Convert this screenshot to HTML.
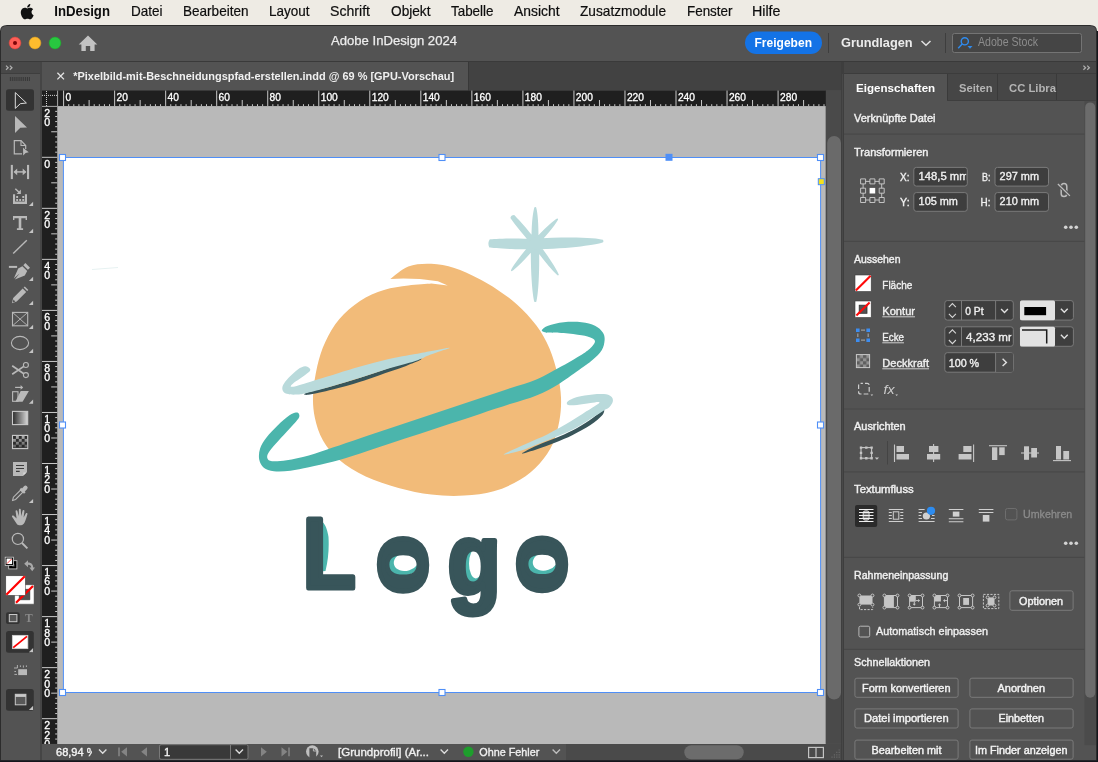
<!DOCTYPE html>
<html lang="de">
<head>
<meta charset="utf-8">
<title>Adobe InDesign 2024 – Pixelbild-mit-Beschneidungspfad-erstellen.indd</title>
<style>
*{box-sizing:border-box;margin:0;padding:0}
html,body{width:1098px;height:762px;overflow:hidden;background:#111111}
body{position:relative;font-family:"Liberation Sans",sans-serif}
#menubar-bg{position:absolute;left:0;top:0;width:1098px;height:31px;background:#eeebe4}
#desk{position:absolute;left:0;top:31px;width:1098px;height:731px;background:#15161c}
text{white-space:pre}
body>svg{will-change:transform;-webkit-font-smoothing:antialiased}
</style>
</head>
<body>
<div id="menubar-bg"></div>
<div id="desk"></div>
<svg width="1098" height="762" viewBox="0 0 1098 762" font-family="'Liberation Sans',sans-serif" style="position:absolute;left:0;top:0">
<defs>
<clipPath id="cv"><rect x="57.3" y="106.1" width="768.5" height="637.9"/></clipPath>
<clipPath id="win"><path d="M0 31 Q0 25 7 25 H1090 Q1097 25 1097 31 V760.2 H0Z"/></clipPath>
<linearGradient id="gsw" x1="0" x2="1" y1="0" y2="0"><stop offset="0" stop-color="#2a2a2a"/><stop offset="1" stop-color="#d8d8d8"/></linearGradient>
<linearGradient id="gfe" x1="0" x2="0" y1="0" y2="1"><stop offset="0" stop-color="#555" stop-opacity="0.1"/><stop offset="1" stop-color="#222" stop-opacity="0.65"/></linearGradient>
<pattern id="chk" width="5.8" height="5.8" patternUnits="userSpaceOnUse" x="13" y="436"><rect width="5.8" height="5.8" fill="#b4b4b4"/><rect width="2.9" height="2.9" fill="#262626"/><rect x="2.9" y="2.9" width="2.9" height="2.9" fill="#262626"/></pattern>
<pattern id="chk2" width="6.4" height="6.4" patternUnits="userSpaceOnUse" x="856.7" y="354.9"><rect width="6.4" height="6.4" fill="#929292"/><rect width="3.2" height="3.2" fill="#5e5e5e"/><rect x="3.2" y="3.2" width="3.2" height="3.2" fill="#5e5e5e"/></pattern>
</defs>
<g id="menubar">
<g transform="translate(14.0,0.3) scale(0.0222,0.0216)" fill="#111"><path d="M788 546c-1-89 73-132 76-134-42-61-106-69-129-70-55-6-107 32-135 32-28 0-71-31-117-30-60 1-116 35-147 89-63 109-16 270 45 358 30 43 65 92 112 90 45-2 62-29 116-29 54 0 70 29 117 28 48-1 79-44 108-87 34-50 48-98 49-101-1 0-94-36-95-146zM699 283c25-30 41-71 37-113-36 1-79 24-104 54-23 26-43 69-38 109 40 3 81-20 105-50z"/></g>
<text x="54.3" y="16.0" font-size="14.2" fill="#0e0e0e" textLength="55.7" lengthAdjust="spacingAndGlyphs" font-weight="bold" >InDesign</text>
<text x="131.0" y="16.0" font-size="14.2" fill="#0e0e0e" textLength="31.5" lengthAdjust="spacingAndGlyphs" stroke="#0e0e0e" stroke-width="0.2" >Datei</text>
<text x="183.0" y="16.0" font-size="14.2" fill="#0e0e0e" textLength="65.5" lengthAdjust="spacingAndGlyphs" stroke="#0e0e0e" stroke-width="0.2" >Bearbeiten</text>
<text x="269.0" y="16.0" font-size="14.2" fill="#0e0e0e" textLength="40.5" lengthAdjust="spacingAndGlyphs" stroke="#0e0e0e" stroke-width="0.2" >Layout</text>
<text x="330.0" y="16.0" font-size="14.2" fill="#0e0e0e" textLength="40.0" lengthAdjust="spacingAndGlyphs" stroke="#0e0e0e" stroke-width="0.2" >Schrift</text>
<text x="391.0" y="16.0" font-size="14.2" fill="#0e0e0e" textLength="39.5" lengthAdjust="spacingAndGlyphs" stroke="#0e0e0e" stroke-width="0.2" >Objekt</text>
<text x="451.0" y="16.0" font-size="14.2" fill="#0e0e0e" textLength="42.5" lengthAdjust="spacingAndGlyphs" stroke="#0e0e0e" stroke-width="0.2" >Tabelle</text>
<text x="514.0" y="16.0" font-size="14.2" fill="#0e0e0e" textLength="45.5" lengthAdjust="spacingAndGlyphs" stroke="#0e0e0e" stroke-width="0.2" >Ansicht</text>
<text x="580.0" y="16.0" font-size="14.2" fill="#0e0e0e" textLength="86.0" lengthAdjust="spacingAndGlyphs" stroke="#0e0e0e" stroke-width="0.2" >Zusatzmodule</text>
<text x="687.0" y="16.0" font-size="14.2" fill="#0e0e0e" textLength="45.5" lengthAdjust="spacingAndGlyphs" stroke="#0e0e0e" stroke-width="0.2" >Fenster</text>
<text x="752.0" y="16.0" font-size="14.2" fill="#0e0e0e" textLength="28.5" lengthAdjust="spacingAndGlyphs" stroke="#0e0e0e" stroke-width="0.2" >Hilfe</text>
</g>
<g id="window" clip-path="url(#win)">
<rect x="0.00" y="25.00" width="1098.00" height="736.00" fill="#535353" />
<g id="titlebar">
<circle cx="15" cy="43" r="5.9" fill="#fe5f57" stroke="#e0443e" stroke-width="0.6"/>
<circle cx="35" cy="43" r="5.9" fill="#febc2e" stroke="#dea123" stroke-width="0.6"/>
<circle cx="55" cy="43" r="5.9" fill="#28c840" stroke="#1dad2b" stroke-width="0.6"/>
<circle cx="15" cy="43" r="2" fill="#7e0508"/>
<path d="M88 35.6 L97.3 44.6 L94.6 44.6 L94.6 51 L90.2 51 L90.2 46 L85.8 46 L85.8 51 L81.4 51 L81.4 44.6 L78.7 44.6 Z" fill="#c2c2c2" />
<text x="331.0" y="45.0" font-size="12.6" fill="#ececec" textLength="126.0" lengthAdjust="spacingAndGlyphs" stroke="#ececec" stroke-width="0.25" >Adobe InDesign 2024</text>
<rect x="745.00" y="31.50" width="77.00" height="22.60" fill="#1473e6" rx="11.3" />
<text x="754.5" y="47.0" font-size="12.5" fill="#ffffff" textLength="57.5" lengthAdjust="spacingAndGlyphs" font-weight="bold" >Freigeben</text>
<line x1="828.50" y1="33.00" x2="828.50" y2="53.00" stroke="#3e3e3e" stroke-width="1" />
<text x="841.0" y="46.8" font-size="13" fill="#ececec" textLength="71.6" lengthAdjust="spacingAndGlyphs" font-weight="bold" >Grundlagen</text>
<path d="M921.5 41 L926 45.3 L930.5 41" fill="none" stroke="#e0e0e0" stroke-width="1.5" />
<line x1="945.50" y1="33.00" x2="945.50" y2="53.00" stroke="#3e3e3e" stroke-width="1" />
<rect x="952.50" y="33.50" width="129.00" height="19.00" fill="#454545" rx="2" stroke="#747474" stroke-width="1" />
<circle cx="964.8" cy="41.3" r="3.6" fill="none" stroke="#2f8cf0" stroke-width="1.4"/>
<line x1="962.20" y1="44.00" x2="958.20" y2="48.20" stroke="#2f8cf0" stroke-width="1.5" />
<path d="M967.5 46 L972.5 46 L970 48.8Z" fill="#2f8cf0" />
<text x="978.0" y="46.3" font-size="12" fill="#8c8c8c" textLength="60.0" lengthAdjust="spacingAndGlyphs" >Adobe Stock</text>
</g>
<g id="doc-tabs">
<rect x="42.00" y="62.00" width="800.00" height="28.50" fill="#424242" />
<rect x="42.00" y="62.00" width="426.00" height="28.50" fill="#535353" />
<line x1="468.50" y1="62.00" x2="468.50" y2="90.50" stroke="#383838" stroke-width="1" />
<line x1="0.00" y1="61.50" x2="1098.00" y2="61.50" stroke="#3a3a3a" stroke-width="1" />
<path d="M57.4 72.8 L64 79.4 M64 72.8 L57.4 79.4" fill="none" stroke="#e4e4e4" stroke-width="1.3" />
<text x="73.2" y="79.7" font-size="11" fill="#f0f0f0" textLength="381.0" lengthAdjust="spacingAndGlyphs" font-weight="bold" >*Pixelbild-mit-Beschneidungspfad-erstellen.indd @ 69 % [GPU-Vorschau]</text>
</g>
<g id="rulers">
<rect x="42.00" y="90.60" width="784.00" height="15.50" fill="#1f1f1f" />
<rect x="42.00" y="106.00" width="15.30" height="637.90" fill="#1f1f1f" />
<line x1="57.60" y1="90.60" x2="57.60" y2="106.10" stroke="#a8a8a8" stroke-width="1" />
<line x1="42.00" y1="106.40" x2="57.30" y2="106.40" stroke="#a8a8a8" stroke-width="1" />
<line x1="46.50" y1="91.00" x2="46.50" y2="106.00" stroke="#d0d0d0" stroke-width="1" stroke-dasharray="1 1"/>
<line x1="42.00" y1="95.40" x2="57.00" y2="95.40" stroke="#d0d0d0" stroke-width="1" stroke-dasharray="1 1"/>
<path d="M68.70 104.2V106.1M73.81 104.2V106.1M78.91 104.2V106.1M84.01 104.2V106.1M94.22 104.2V106.1M99.32 104.2V106.1M104.43 104.2V106.1M109.53 104.2V106.1M119.74 104.2V106.1M124.84 104.2V106.1M129.94 104.2V106.1M135.05 104.2V106.1M145.25 104.2V106.1M150.36 104.2V106.1M155.46 104.2V106.1M160.56 104.2V106.1M170.77 104.2V106.1M175.87 104.2V106.1M180.98 104.2V106.1M186.08 104.2V106.1M196.29 104.2V106.1M201.39 104.2V106.1M206.50 104.2V106.1M211.60 104.2V106.1M221.81 104.2V106.1M226.91 104.2V106.1M232.01 104.2V106.1M237.12 104.2V106.1M247.32 104.2V106.1M252.43 104.2V106.1M257.53 104.2V106.1M262.63 104.2V106.1M272.84 104.2V106.1M277.94 104.2V106.1M283.05 104.2V106.1M288.15 104.2V106.1M298.36 104.2V106.1M303.46 104.2V106.1M308.56 104.2V106.1M313.67 104.2V106.1M323.87 104.2V106.1M328.98 104.2V106.1M334.08 104.2V106.1M339.18 104.2V106.1M349.39 104.2V106.1M354.49 104.2V106.1M359.60 104.2V106.1M364.70 104.2V106.1M374.91 104.2V106.1M380.01 104.2V106.1M385.11 104.2V106.1M390.22 104.2V106.1M400.42 104.2V106.1M405.53 104.2V106.1M410.63 104.2V106.1M415.73 104.2V106.1M425.94 104.2V106.1M431.04 104.2V106.1M436.15 104.2V106.1M441.25 104.2V106.1M451.46 104.2V106.1M456.56 104.2V106.1M461.67 104.2V106.1M466.77 104.2V106.1M476.98 104.2V106.1M482.08 104.2V106.1M487.18 104.2V106.1M492.29 104.2V106.1M502.49 104.2V106.1M507.60 104.2V106.1M512.70 104.2V106.1M517.80 104.2V106.1M528.01 104.2V106.1M533.11 104.2V106.1M538.22 104.2V106.1M543.32 104.2V106.1M553.53 104.2V106.1M558.63 104.2V106.1M563.73 104.2V106.1M568.84 104.2V106.1M579.04 104.2V106.1M584.15 104.2V106.1M589.25 104.2V106.1M594.35 104.2V106.1M604.56 104.2V106.1M609.66 104.2V106.1M614.77 104.2V106.1M619.87 104.2V106.1M630.08 104.2V106.1M635.18 104.2V106.1M640.28 104.2V106.1M645.39 104.2V106.1M655.59 104.2V106.1M660.70 104.2V106.1M665.80 104.2V106.1M670.90 104.2V106.1M681.11 104.2V106.1M686.21 104.2V106.1M691.32 104.2V106.1M696.42 104.2V106.1M706.63 104.2V106.1M711.73 104.2V106.1M716.84 104.2V106.1M721.94 104.2V106.1M732.15 104.2V106.1M737.25 104.2V106.1M742.35 104.2V106.1M747.46 104.2V106.1M757.66 104.2V106.1M762.77 104.2V106.1M767.87 104.2V106.1M772.97 104.2V106.1M783.18 104.2V106.1M788.28 104.2V106.1M793.39 104.2V106.1M798.49 104.2V106.1M808.70 104.2V106.1M813.80 104.2V106.1M818.90 104.2V106.1M824.01 104.2V106.1M89.12 100V106.1M140.15 100V106.1M191.19 100V106.1M242.22 100V106.1M293.25 100V106.1M344.29 100V106.1M395.32 100V106.1M446.36 100V106.1M497.39 100V106.1M548.42 100V106.1M599.46 100V106.1M650.49 100V106.1M701.52 100V106.1M752.56 100V106.1M803.59 100V106.1M63.60 90.6V106.1M114.63 90.6V106.1M165.67 90.6V106.1M216.70 90.6V106.1M267.74 90.6V106.1M318.77 90.6V106.1M369.80 90.6V106.1M420.84 90.6V106.1M471.87 90.6V106.1M522.91 90.6V106.1M573.94 90.6V106.1M624.97 90.6V106.1M676.01 90.6V106.1M727.04 90.6V106.1M778.08 90.6V106.1" fill="none" stroke="#c9c9c9" stroke-width="1" />
<text x="65.5" y="100.8" font-size="10.6" fill="#ffffff" textLength="5.7" lengthAdjust="spacingAndGlyphs" stroke="#ffffff" stroke-width="0.3" >0</text>
<text x="116.5" y="100.8" font-size="10.6" fill="#ffffff" textLength="11.4" lengthAdjust="spacingAndGlyphs" stroke="#ffffff" stroke-width="0.3" >20</text>
<text x="167.6" y="100.8" font-size="10.6" fill="#ffffff" textLength="11.4" lengthAdjust="spacingAndGlyphs" stroke="#ffffff" stroke-width="0.3" >40</text>
<text x="218.6" y="100.8" font-size="10.6" fill="#ffffff" textLength="11.4" lengthAdjust="spacingAndGlyphs" stroke="#ffffff" stroke-width="0.3" >60</text>
<text x="269.6" y="100.8" font-size="10.6" fill="#ffffff" textLength="11.4" lengthAdjust="spacingAndGlyphs" stroke="#ffffff" stroke-width="0.3" >80</text>
<text x="320.7" y="100.8" font-size="10.6" fill="#ffffff" textLength="17.1" lengthAdjust="spacingAndGlyphs" stroke="#ffffff" stroke-width="0.3" >100</text>
<text x="371.7" y="100.8" font-size="10.6" fill="#ffffff" textLength="17.1" lengthAdjust="spacingAndGlyphs" stroke="#ffffff" stroke-width="0.3" >120</text>
<text x="422.7" y="100.8" font-size="10.6" fill="#ffffff" textLength="17.1" lengthAdjust="spacingAndGlyphs" stroke="#ffffff" stroke-width="0.3" >140</text>
<text x="473.8" y="100.8" font-size="10.6" fill="#ffffff" textLength="17.1" lengthAdjust="spacingAndGlyphs" stroke="#ffffff" stroke-width="0.3" >160</text>
<text x="524.8" y="100.8" font-size="10.6" fill="#ffffff" textLength="17.1" lengthAdjust="spacingAndGlyphs" stroke="#ffffff" stroke-width="0.3" >180</text>
<text x="575.8" y="100.8" font-size="10.6" fill="#ffffff" textLength="17.1" lengthAdjust="spacingAndGlyphs" stroke="#ffffff" stroke-width="0.3" >200</text>
<text x="626.9" y="100.8" font-size="10.6" fill="#ffffff" textLength="17.1" lengthAdjust="spacingAndGlyphs" stroke="#ffffff" stroke-width="0.3" >220</text>
<text x="677.9" y="100.8" font-size="10.6" fill="#ffffff" textLength="17.1" lengthAdjust="spacingAndGlyphs" stroke="#ffffff" stroke-width="0.3" >240</text>
<text x="728.9" y="100.8" font-size="10.6" fill="#ffffff" textLength="17.1" lengthAdjust="spacingAndGlyphs" stroke="#ffffff" stroke-width="0.3" >260</text>
<text x="780.0" y="100.8" font-size="10.6" fill="#ffffff" textLength="17.1" lengthAdjust="spacingAndGlyphs" stroke="#ffffff" stroke-width="0.3" >280</text>
<path d="M55.2 111.37H57.3M55.2 116.47H57.3M55.2 121.58H57.3M55.2 126.68H57.3M51.2 131.78H57.3M55.2 136.89H57.3M55.2 141.99H57.3M55.2 147.09H57.3M55.2 152.20H57.3M42 157.30H57.3M55.2 162.40H57.3M55.2 167.51H57.3M55.2 172.61H57.3M55.2 177.71H57.3M51.2 182.82H57.3M55.2 187.92H57.3M55.2 193.02H57.3M55.2 198.13H57.3M55.2 203.23H57.3M42 208.33H57.3M55.2 213.44H57.3M55.2 218.54H57.3M55.2 223.64H57.3M55.2 228.75H57.3M51.2 233.85H57.3M55.2 238.95H57.3M55.2 244.06H57.3M55.2 249.16H57.3M55.2 254.26H57.3M42 259.37H57.3M55.2 264.47H57.3M55.2 269.57H57.3M55.2 274.68H57.3M55.2 279.78H57.3M51.2 284.88H57.3M55.2 289.99H57.3M55.2 295.09H57.3M55.2 300.20H57.3M55.2 305.30H57.3M42 310.40H57.3M55.2 315.51H57.3M55.2 320.61H57.3M55.2 325.71H57.3M55.2 330.82H57.3M51.2 335.92H57.3M55.2 341.02H57.3M55.2 346.13H57.3M55.2 351.23H57.3M55.2 356.33H57.3M42 361.44H57.3M55.2 366.54H57.3M55.2 371.64H57.3M55.2 376.75H57.3M55.2 381.85H57.3M51.2 386.95H57.3M55.2 392.06H57.3M55.2 397.16H57.3M55.2 402.26H57.3M55.2 407.37H57.3M42 412.47H57.3M55.2 417.57H57.3M55.2 422.68H57.3M55.2 427.78H57.3M55.2 432.88H57.3M51.2 437.99H57.3M55.2 443.09H57.3M55.2 448.19H57.3M55.2 453.30H57.3M55.2 458.40H57.3M42 463.50H57.3M55.2 468.61H57.3M55.2 473.71H57.3M55.2 478.81H57.3M55.2 483.92H57.3M51.2 489.02H57.3M55.2 494.12H57.3M55.2 499.23H57.3M55.2 504.33H57.3M55.2 509.43H57.3M42 514.54H57.3M55.2 519.64H57.3M55.2 524.74H57.3M55.2 529.85H57.3M55.2 534.95H57.3M51.2 540.06H57.3M55.2 545.16H57.3M55.2 550.26H57.3M55.2 555.37H57.3M55.2 560.47H57.3M42 565.57H57.3M55.2 570.68H57.3M55.2 575.78H57.3M55.2 580.88H57.3M55.2 585.99H57.3M51.2 591.09H57.3M55.2 596.19H57.3M55.2 601.30H57.3M55.2 606.40H57.3M55.2 611.50H57.3M42 616.61H57.3M55.2 621.71H57.3M55.2 626.81H57.3M55.2 631.92H57.3M55.2 637.02H57.3M51.2 642.12H57.3M55.2 647.23H57.3M55.2 652.33H57.3M55.2 657.43H57.3M55.2 662.54H57.3M42 667.64H57.3M55.2 672.74H57.3M55.2 677.85H57.3M55.2 682.95H57.3M55.2 688.05H57.3M51.2 693.16H57.3M55.2 698.26H57.3M55.2 703.36H57.3M55.2 708.47H57.3M55.2 713.57H57.3M42 718.67H57.3M55.2 723.78H57.3M55.2 728.88H57.3M55.2 733.98H57.3M55.2 739.09H57.3" fill="none" stroke="#c9c9c9" stroke-width="1" />
<g font-size="10.6" fill="#ffffff" stroke="#ffffff" stroke-width="0.3" text-anchor="middle">
<text x="47.3" y="116.9">2</text><text x="47.3" y="126.1">0</text>
<text x="47.3" y="167.9">0</text>
<text x="47.3" y="218.9">2</text><text x="47.3" y="228.2">0</text>
<text x="47.3" y="270.0">4</text><text x="47.3" y="279.2">0</text>
<text x="47.3" y="321.0">6</text><text x="47.3" y="330.3">0</text>
<text x="47.3" y="372.0">8</text><text x="47.3" y="381.3">0</text>
<text x="47.3" y="423.1">1</text><text x="47.3" y="432.3">0</text><text x="47.3" y="441.6">0</text>
<text x="47.3" y="474.1">1</text><text x="47.3" y="483.4">2</text><text x="47.3" y="492.6">0</text>
<text x="47.3" y="525.1">1</text><text x="47.3" y="534.4">4</text><text x="47.3" y="543.6">0</text>
<text x="47.3" y="576.2">1</text><text x="47.3" y="585.4">6</text><text x="47.3" y="594.7">0</text>
<text x="47.3" y="627.2">1</text><text x="47.3" y="636.5">8</text><text x="47.3" y="645.7">0</text>
<text x="47.3" y="678.2">2</text><text x="47.3" y="687.5">0</text><text x="47.3" y="696.7">0</text>
<text x="47.3" y="729.3">2</text><text x="47.3" y="738.5">2</text><text x="47.3" y="747.8">0</text>
</g>
</g>
<g id="pasteboard">
<rect x="57.30" y="106.10" width="768.50" height="637.90" fill="#b9b9b9" />
<rect x="63.40" y="157.50" width="757.20" height="535.00" fill="#ffffff" />
<g clip-path="url(#cv)">
<path d="M537.2 239.2C510.0 237.7 493.2 239.1 489.6 239.4Q487.3 243.5 489.4 247.6C493.1 248.0 509.8 249.8 537.1 249.0ZM531.7 249.5C572.7 248.9 597.7 244.4 603.1 242.3Q603.8 241.0 602.9 239.7C597.4 238.1 572.1 235.9 531.3 239.0ZM538.2 245.3C539.2 223.6 537.2 210.2 536.1 207.3Q535.3 206.5 534.5 207.3C533.3 210.2 531.0 223.5 531.6 245.3ZM530.9 240.6C530.2 275.5 532.9 297.1 534.3 301.7Q535.3 302.5 536.3 301.7C537.7 297.0 540.1 275.5 538.9 240.6ZM538.3 242.9C525.3 226.3 516.2 216.9 514.2 214.9Q510.9 214.8 510.4 218.1C512.0 220.4 519.6 231.0 533.7 246.8ZM535.8 246.6C549.9 232.4 557.0 222.1 558.1 219.5Q558.1 218.4 557.1 218.5C554.6 219.8 544.8 227.7 531.7 242.8ZM533.9 240.3C519.4 256.2 512.1 267.4 511.0 270.3Q511.0 271.3 512.0 271.1C514.6 269.6 524.7 260.7 538.2 244.0ZM531.5 243.6C545.0 262.9 555.1 273.5 557.8 275.4Q558.8 275.6 558.8 274.6C557.8 271.5 550.6 258.8 536.0 240.3Z" fill="#b9dadb" />
<circle cx="534.9" cy="243.5" r="6" fill="#b9dadb"/>
<path d="M390.3 278.9C393.3 276.8 401.5 268.9 408.3 266.4C415.1 263.9 423.6 263.5 431.3 263.8C439.0 264.1 446.6 265.6 454.3 268.0C462.0 270.4 470.2 274.3 477.3 277.9C484.4 281.5 490.4 285.0 497.0 289.4C503.6 293.8 510.1 298.2 516.7 304.2C523.3 310.2 530.9 318.1 536.4 325.5C541.9 332.9 546.0 340.3 549.5 348.5C553.0 356.7 555.8 366.6 557.7 374.8C559.6 383.0 560.7 390.1 561.0 397.7C561.3 405.3 560.8 413.0 559.4 420.7C558.0 428.4 556.1 436.6 552.8 443.7C549.5 450.8 545.2 457.4 539.7 463.4C534.2 469.4 527.7 475.1 520.0 479.8C512.3 484.5 503.0 488.7 493.7 491.3C484.4 493.9 474.6 495.1 464.2 495.6C453.8 496.2 442.2 495.9 431.3 494.6C420.4 493.3 409.4 491.0 398.5 488.0C387.6 485.0 375.6 481.1 365.7 476.5C355.8 471.9 346.5 466.1 339.4 460.1C332.3 454.1 327.1 447.5 323.0 440.4C318.9 433.3 316.4 425.0 314.8 417.4C313.2 409.8 312.7 403.1 313.1 394.5C313.5 385.9 315.3 374.8 317.3 366.0C319.3 357.2 321.6 349.8 325.3 341.9C329.0 334.0 333.6 325.7 339.4 318.9C345.2 312.1 352.6 305.7 360.0 300.9C367.4 296.1 375.9 292.6 384.0 290.0C392.1 287.4 400.4 286.6 408.3 285.5C416.2 284.4 427.5 283.8 431.3 283.5L447.7 285.5 L437.9 281.2 Q414 277.5 390.3 278.9Z" fill="#f2bb79" />
<path d="M306.9 392.6C311.0 391.1 323.8 388.4 332.7 385.9C341.6 383.4 351.0 380.6 360.2 377.7C369.4 374.8 378.6 371.7 387.8 368.5C397.0 365.3 409.8 359.9 415.3 358.4C420.8 356.9 422.5 358.4 421.0 359.6C419.5 360.9 411.6 363.8 406.1 365.9C400.6 368.0 395.5 369.5 387.8 372.2C380.1 374.9 369.4 378.9 360.2 381.8C351.0 384.7 341.4 387.4 332.7 389.6C324.0 391.8 312.3 394.3 308.0 394.8C303.7 395.3 302.8 394.1 306.9 392.6Z" fill="#38555a" />
<path d="M603.5 409.8C605.0 409.4 604.2 413.1 602.0 415.6C599.8 418.1 595.4 421.8 590.5 425.0C585.6 428.2 578.7 432.0 572.7 435.0C566.8 438.0 560.8 440.4 554.8 442.8C548.8 445.2 542.5 447.4 537.0 449.2C531.5 451.0 521.8 454.1 521.8 453.5C521.8 452.9 530.8 448.3 537.0 445.5C543.2 442.7 552.6 439.4 559.3 436.5C566.0 433.6 571.5 431.1 577.1 428.0C582.7 424.9 588.3 421.0 592.7 418.0C597.1 415.0 602.0 410.2 603.5 409.8Z" fill="#38555a" />
<path d="M309.7 368.5C308.9 367.7 307.1 366.2 305.1 366.3C303.1 366.4 300.6 367.5 297.8 369.4C295.1 371.3 291.1 375.1 288.6 377.7C286.2 380.3 284.1 382.9 283.1 385.0C282.1 387.1 282.1 389.0 282.7 390.5C283.3 392.0 284.5 393.1 286.7 393.8C288.9 394.5 292.5 394.8 295.9 394.6C299.3 394.5 300.8 394.3 306.9 392.9C313.0 391.4 323.8 388.4 332.7 385.9C341.6 383.4 351.0 380.5 360.2 377.7C369.4 374.9 378.6 371.6 387.8 368.8C397.0 366.0 408.3 363.4 415.3 361.0C422.3 358.6 425.7 356.4 430.0 354.7C434.3 353.0 437.7 352.0 441.0 350.9C444.3 349.8 449.6 348.2 449.6 347.9C449.6 347.6 444.3 348.6 441.0 349.2C437.7 349.8 434.3 350.4 430.0 351.2C425.7 352.0 422.3 352.8 415.3 354.1C408.3 355.5 397.0 357.2 387.8 359.3C378.6 361.4 369.4 364.0 360.2 366.6C351.0 369.2 340.3 372.6 332.7 374.9C325.1 377.2 319.5 378.8 314.3 380.4C309.1 382.0 304.9 383.4 301.4 384.5C297.9 385.6 295.0 386.6 293.2 386.8C291.4 387.0 290.4 386.8 290.8 385.9C291.2 385.0 293.5 383.1 295.9 381.3C298.3 379.5 302.8 376.6 305.1 374.9C307.4 373.2 308.9 372.3 309.7 371.2C310.5 370.1 310.5 369.3 309.7 368.5Z" fill="#b9dadb" />
<path d="M567.7 401.5C569.2 400.2 572.9 398.3 577.1 397.1C581.3 395.9 587.9 394.9 592.7 394.4C597.5 393.9 602.9 393.8 606.1 394.2C609.3 394.6 610.6 395.9 611.7 397.1C612.8 398.3 613.2 399.8 612.8 401.5C612.4 403.2 611.0 405.6 609.5 407.1C608.0 408.6 606.7 408.8 603.9 410.5C601.1 412.2 597.2 414.8 592.7 417.6C588.2 420.4 582.7 424.3 577.1 427.3C571.5 430.3 566.0 432.7 559.3 435.6C552.6 438.5 543.3 442.1 537.0 444.6C530.7 447.1 526.9 449.0 521.3 450.6C515.7 452.2 502.8 455.5 503.5 454.4C504.2 453.3 518.4 447.3 525.8 443.9C533.2 440.5 540.7 437.6 548.1 433.9C555.5 430.2 564.1 425.3 570.4 421.6C576.7 417.9 581.2 414.8 586.0 411.6C590.8 408.5 598.6 404.1 599.4 402.7C600.1 401.3 594.2 402.7 590.5 403.1C586.8 403.5 580.8 404.6 577.1 404.9C573.4 405.2 569.8 405.5 568.2 404.9C566.6 404.3 566.2 402.8 567.7 401.5Z" fill="#b9dadb" />
<path d="M295.9 412.6C294.4 412.9 292.6 413.2 289.5 415.3C286.4 417.4 281.4 421.7 277.6 425.4C273.8 429.1 269.4 433.6 266.5 437.4C263.6 441.2 261.3 444.7 260.1 448.4C258.9 452.1 258.6 456.2 259.2 459.4C259.8 462.6 261.4 465.7 263.8 467.7C266.2 469.7 269.5 470.8 273.9 471.3C278.3 471.8 284.6 471.5 290.4 470.8C296.2 470.1 301.8 468.8 308.8 467.3C315.9 465.8 324.1 464.1 332.7 461.8C341.3 459.5 350.6 456.4 360.2 453.4C369.8 450.4 380.0 446.8 390.0 443.5C400.0 440.2 410.0 436.9 420.0 433.7C430.0 430.4 440.0 427.1 450.0 423.8C460.0 420.5 470.0 417.2 480.0 413.9C490.0 410.7 500.5 407.2 510.0 404.1C519.5 401.0 528.8 398.6 537.0 395.2C545.2 391.8 551.9 388.2 559.3 383.7C566.7 379.2 576.0 372.1 581.6 368.1C587.2 364.1 589.4 362.8 592.7 359.8C596.1 356.8 599.7 353.5 601.7 350.2C603.7 346.9 604.4 343.2 604.6 340.2C604.8 337.2 604.4 334.8 602.8 332.4C601.2 330.0 598.5 327.4 595.0 325.7C591.5 324.0 586.8 322.9 581.6 322.3C576.4 321.7 569.3 321.7 563.7 322.3C558.1 322.9 551.7 324.4 548.1 325.7C544.5 327.0 542.3 329.0 541.9 330.1C541.5 331.2 542.3 331.9 545.9 332.4C549.5 332.9 557.8 332.5 563.7 333.0C569.7 333.5 577.0 334.5 581.6 335.3C586.2 336.1 589.4 336.9 591.6 337.9C593.8 338.9 595.0 339.8 595.0 341.3C595.0 342.8 593.8 344.7 591.6 346.9C589.4 349.1 587.0 351.2 581.6 354.7C576.2 358.1 566.7 363.5 559.3 367.6C551.9 371.7 545.2 375.9 537.0 379.3C528.8 382.8 519.5 385.2 510.0 388.3C500.5 391.5 490.0 395.0 480.0 398.3C470.0 401.6 460.0 405.0 450.0 408.3C440.0 411.6 430.0 415.0 420.0 418.3C410.0 421.6 400.0 425.0 390.0 428.3C380.0 431.6 369.8 435.0 360.2 438.2C350.6 441.4 341.3 444.7 332.7 447.6C324.1 450.5 316.5 453.4 308.8 455.5C301.1 457.6 292.8 459.4 286.7 460.3C280.6 461.2 275.2 461.5 272.0 461.2C268.8 460.9 268.1 459.9 267.5 458.5C266.9 457.1 267.0 455.4 268.4 453.0C269.8 450.6 272.6 447.3 275.7 443.8C278.8 440.3 283.3 435.5 286.7 431.8C290.1 428.1 293.8 424.1 295.9 421.7C298.0 419.2 298.7 418.5 299.2 417.1C299.7 415.7 299.2 414.2 298.7 413.5C298.1 412.8 297.4 412.3 295.9 412.6Z" fill="#4bb5ac" />
<path d="M92 269.5 L118 267.5" fill="none" stroke="#dfeeee" stroke-width="0.8" />
<path d="M307.6 523 Q310 518.9 316 518.9 Q326 519.5 328.5 537 Q329.5 555 325.5 571 L320 571.5 L321 540 Q320 526 312 522.5 Z" fill="#4bb5ac" />
<ellipse cx="402.5" cy="564.3" rx="15.5" ry="11.5" fill="#4bb5ac"/><ellipse cx="406.5" cy="561.1" rx="13.0" ry="9.5" fill="#ffffff" transform="rotate(-18 406.5 561.1)"/>
<ellipse cx="473.0" cy="566.0" rx="9.0" ry="17.0" fill="#4bb5ac"/><ellipse cx="475.8" cy="563.5" rx="6.8" ry="15.0" fill="#ffffff"/>
<ellipse cx="541.5" cy="564.0" rx="15.5" ry="11.5" fill="#4bb5ac"/><ellipse cx="545.5" cy="560.8" rx="13.0" ry="9.5" fill="#ffffff" transform="rotate(-18 545.5 560.8)"/>
<text transform="scale(0.879,1)" x="344.2 432.3 509.2 590.3" y="588.4 534.4 593.8 534.0" rotate="0 90 0 90" font-family="'Liberation Sans',sans-serif" font-weight="bold" font-size="99.3" fill="#38555a" stroke="#38555a" stroke-width="5.0" stroke-linejoin="round">Logo</text>
<rect x="63.40" y="157.50" width="757.20" height="535.00" fill="none" stroke="#4f8ff7" stroke-width="1" />
<rect x="59.50" y="154.50" width="6.00" height="6.00" fill="#ffffff" stroke="#4f8ff7" stroke-width="1.1" />
<rect x="439.00" y="154.50" width="6.00" height="6.00" fill="#ffffff" stroke="#4f8ff7" stroke-width="1.1" />
<rect x="817.50" y="154.50" width="6.00" height="6.00" fill="#ffffff" stroke="#4f8ff7" stroke-width="1.1" />
<rect x="59.50" y="422.00" width="6.00" height="6.00" fill="#ffffff" stroke="#4f8ff7" stroke-width="1.1" />
<rect x="817.50" y="422.00" width="6.00" height="6.00" fill="#ffffff" stroke="#4f8ff7" stroke-width="1.1" />
<rect x="59.50" y="689.50" width="6.00" height="6.00" fill="#ffffff" stroke="#4f8ff7" stroke-width="1.1" />
<rect x="439.00" y="689.50" width="6.00" height="6.00" fill="#ffffff" stroke="#4f8ff7" stroke-width="1.1" />
<rect x="817.50" y="689.50" width="6.00" height="6.00" fill="#ffffff" stroke="#4f8ff7" stroke-width="1.1" />
<rect x="665.50" y="153.80" width="7.00" height="7.00" fill="#4f8ff7" />
<rect x="818.30" y="178.70" width="6.00" height="6.00" fill="#f5e11c" stroke="#4f8ff7" stroke-width="1" />
</g>
</g>
<g id="scrollbars">
<rect x="825.80" y="90.60" width="16.50" height="653.10" fill="#4a4a4a" />
<rect x="827.20" y="136.00" width="13.80" height="563.60" fill="#6a6a6a" rx="6.9" />
</g>
<g id="statusbar">
<rect x="42.00" y="744.00" width="800.30" height="16.20" fill="#535353" />
<rect x="566.00" y="744.00" width="276.30" height="16.20" fill="#4a4a4a" />
<svg x="56" y="744" width="36" height="16" overflow="hidden"><text x="0.0" y="12.3" font-size="11.2" fill="#f4f4f4" textLength="40.5" lengthAdjust="spacingAndGlyphs" stroke="#f4f4f4" stroke-width="0.35" >68,94 %</text>
</svg>
<path d="M99 749.6 L102.7 753.2 L106.4 749.6" fill="none" stroke="#dcdcdc" stroke-width="1.4" />
<path d="M119 747.4V756.2" fill="None" stroke="#848484" stroke-width="1.6" />
<path d="M127 747.2 L121.2 751.8 L127 756.4Z" fill="#848484" />
<path d="M147 747.2 L141.2 751.8 L147 756.4Z" fill="#848484" />
<rect x="159.50" y="744.70" width="88.50" height="14.60" fill="#393939" rx="1.5" stroke="#7a7a7a" stroke-width="1" />
<line x1="230.50" y1="745.00" x2="230.50" y2="759.00" stroke="#7a7a7a" stroke-width="1" />
<text x="164.0" y="756.4" font-size="11.2" fill="#f4f4f4" stroke="#f4f4f4" stroke-width="0.35" >1</text>
<path d="M235.6 749.6 L239.3 753.2 L243 749.6" fill="none" stroke="#dcdcdc" stroke-width="1.4" />
<path d="M261 747.2 L266.8 751.8 L261 756.4Z" fill="#848484" />
<path d="M281.5 747.2 L287.3 751.8 L281.5 756.4Z" fill="#848484" />
<path d="M289 747.4V756.2" fill="None" stroke="#848484" stroke-width="1.6" />
<circle cx="312.3" cy="751.6" r="6.3" fill="#bfbfbf"/>
<path d="M309.4 758.4 V748.2 H313.6 L316.2 750.8 V758.4Z" fill="#535353" />
<path d="M313.4 748.2 V751 H316.2" fill="None" stroke="#bfbfbf" stroke-width="0.9" />
<path d="M320 755.4 L323 755.4 L321.5 757.3Z" fill="#bdbdbd" />
<text x="338.0" y="756.4" font-size="11.2" fill="#f0f0f0" textLength="91.0" lengthAdjust="spacingAndGlyphs" stroke="#f0f0f0" stroke-width="0.35" >[Grundprofil] (Ar...</text>
<path d="M440.6 749.6 L444.3 753.2 L448 749.6" fill="none" stroke="#dcdcdc" stroke-width="1.4" />
<circle cx="468.4" cy="751.8" r="5.2" fill="#1e9e2c"/>
<text x="479.3" y="756.4" font-size="11.2" fill="#f0f0f0" textLength="60.0" lengthAdjust="spacingAndGlyphs" stroke="#f0f0f0" stroke-width="0.35" >Ohne Fehler</text>
<path d="M552.6 749.6 L556.3 753.2 L560 749.6" fill="none" stroke="#bdbdbd" stroke-width="1.4" />
<rect x="684.30" y="745.20" width="59.40" height="14.00" fill="#6c6c6c" rx="7" />
<rect x="808.60" y="747.40" width="14.80" height="10.20" fill="none" stroke="#c4c4c4" stroke-width="1.2" />
<line x1="816.00" y1="747.40" x2="816.00" y2="757.60" stroke="#c4c4c4" stroke-width="1.2" />
<path d="M838.6 749.4h1.2v1.2h-1.2zM838.6 751.8h1.2v1.2h-1.2zM836.2 751.8h1.2v1.2h-1.2zM838.6 754.2h1.2v1.2h-1.2zM836.2 754.2h1.2v1.2h-1.2zM833.8 754.2h1.2v1.2h-1.2zM838.6 756.6h1.2v1.2h-1.2zM836.2 756.6h1.2v1.2h-1.2zM833.8 756.6h1.2v1.2h-1.2zM831.4 756.6h1.2v1.2h-1.2z" fill="#686868" />
</g>
<g id="toolbox">
<rect x="0.00" y="62.00" width="40.00" height="698.20" fill="#535353" />
<rect x="40.00" y="62.00" width="2.00" height="698.20" fill="#454545" />
<rect x="0.00" y="62.00" width="40.00" height="11.30" fill="#484848" />
<line x1="0.00" y1="73.50" x2="40.00" y2="73.50" stroke="#3e3e3e" stroke-width="1" />
<path d="M6 65.6 L8.2 67.7 L6 69.8 M9.8 65.6 L12 67.7 L9.8 69.8" fill="none" stroke="#b0b0b0" stroke-width="1.2" />
<path d="M10.4 77V81M12.3 77V81M14.2 77V81M16.1 77V81M18.0 77V81M19.9 77V81M21.8 77V81M23.7 77V81M25.6 77V81M27.5 77V81M29.4 77V81" fill="none" stroke="#363636" stroke-width="0.9" />
<rect x="6.00" y="89.20" width="28.00" height="21.60" fill="#333333" rx="2.5" />
<path d="M15.3 92.6 L15.3 108.4 L20.3 103.7 L26.4 103 Z" fill="none" stroke="#dcdcdc" stroke-width="1.0" />
<path d="M15 116 L15 133.1 L20.3 127.8 L27 127.4 Z" fill="#b9b9b9" />
<path d="M22 153.8 H14.3 V140.6 H21 L25.7 145.5 V149" fill="None" stroke="#b9b9b9" stroke-width="1.2" />
<path d="M21 140.6 V145.5 H25.7" fill="None" stroke="#b9b9b9" stroke-width="1.1" />
<path d="M23 147.7 L23.2 155.6 L25.6 153 L28.8 152.3 Z" fill="#b9b9b9" />
<rect x="10.80" y="164.90" width="2.10" height="14.20" fill="#b9b9b9" />
<rect x="27.00" y="164.90" width="2.10" height="14.20" fill="#b9b9b9" />
<line x1="14.50" y1="171.90" x2="25.40" y2="171.90" stroke="#b9b9b9" stroke-width="1.5" />
<path d="M13.5 171.9 L17.2 168.6 V175.2Z M26.4 171.9 L22.7 168.6 V175.2Z" fill="#b9b9b9" />
<path d="M13 194.2 H15.1 V201.6 H24.9 V194.2 H27 V203.9 H13Z" fill="#b9b9b9" />
<path d="M16.2 196h1.9v1.9h-1.9z M22.3 196h1.9v1.9h-1.9z M16.2 199h1.9v1.9h-1.9z M19.2 199h1.9v1.9h-1.9z M22.3 199h1.9v1.9h-1.9z" fill="#b9b9b9" />
<line x1="15.30" y1="188.70" x2="19.60" y2="192.80" stroke="#b9b9b9" stroke-width="1.5" />
<path d="M20.9 194 L20.9 189.6 L16.6 194Z" fill="#b9b9b9" />
<path d="M33.1 201.7 L33.1 205.9 L28.9 205.9 Z" fill="#c4c4c4" />
<path d="M13 216 H27 V220 H25.6 V218.2 H21.3 V228.3 H23.1 V230 H16.9 V228.3 H18.7 V218.2 H14.4 V220 H13Z" fill="#b9b9b9" />
<path d="M33.1 228.7 L33.1 232.9 L28.9 232.9 Z" fill="#c4c4c4" />
<line x1="13.20" y1="253.50" x2="26.80" y2="240.20" stroke="#b9b9b9" stroke-width="1.4" />
<rect x="8.90" y="265.90" width="8.20" height="2.00" fill="#b9b9b9" />
<path d="M13.8 278.6 L18.2 268.6 L22.4 266.3 L27.2 271.1 L24.8 275.4 L14.8 279.6 L19.6 273.4 Z" fill="#b9b9b9" />
<path d="M23.3 265.2 L25.4 263.1 L30 267.7 L27.9 269.8Z" fill="#b9b9b9" />
<path d="M33.1 276.7 L33.1 280.9 L28.9 280.9 Z" fill="#c4c4c4" />
<path d="M11.9 303.2 L13.2 298 L22.7 288.5 L26.2 292 L16.7 301.6 Z" fill="#b9b9b9" />
<path d="M23.6 287.6 L24.8 286.4 L28.3 289.9 L27.1 291.1Z" fill="#b9b9b9" />
<path d="M13.4 299.6 L15.4 301.6 L12.7 302.5Z" fill="#535353" />
<path d="M33.1 300.7 L33.1 304.9 L28.9 304.9 Z" fill="#c4c4c4" />
<rect x="12.50" y="312.40" width="15.20" height="13.40" fill="none" stroke="#b9b9b9" stroke-width="1.1" />
<path d="M12.5 312.4 L27.7 325.8 M27.7 312.4 L12.5 325.8" fill="None" stroke="#b9b9b9" stroke-width="0.9" />
<path d="M33.1 324.7 L33.1 328.9 L28.9 328.9 Z" fill="#c4c4c4" />
<ellipse cx="20" cy="343" rx="8.6" ry="6.6" fill="none" stroke="#b9b9b9" stroke-width="1.1"/>
<path d="M33.1 348.8 L33.1 353.0 L28.9 353.0 Z" fill="#c4c4c4" />
<circle cx="25.9" cy="365" r="2.5" fill="none" stroke="#b9b9b9" stroke-width="1.1"/><circle cx="25.9" cy="375.1" r="2.5" fill="none" stroke="#b9b9b9" stroke-width="1.1"/>
<path d="M23.8 366.4 L12.2 374.3 M23.8 373.7 L12.2 365.8" fill="None" stroke="#b9b9b9" stroke-width="1.7" />
<line x1="15.10" y1="387.40" x2="21.50" y2="387.40" stroke="#b9b9b9" stroke-width="1.2" />
<path d="M23.2 387.4 L20.6 385 V389.8Z" fill="#b9b9b9" />
<rect x="12.60" y="391.70" width="5.40" height="9.60" fill="none" stroke="#b9b9b9" stroke-width="1.1" />
<path d="M20.7 391.1 H28.9 L22.6 401.8 H15.4Z" fill="#b9b9b9" />
<path d="M33.1 399.6 L33.1 403.8 L28.9 403.8 Z" fill="#c4c4c4" />
<rect x="12.50" y="411.40" width="15.20" height="13.20" fill="url(#gsw)" stroke="#c9c9c9" stroke-width="1.1" />
<rect x="12.50" y="435.40" width="15.20" height="13.20" fill="url(#chk)" stroke="#c9c9c9" stroke-width="1.1" />
<rect x="13.00" y="436.00" width="14.20" height="12.00" fill="url(#gfe)" />
<path d="M13 462 H27 V472 L23 476 H13Z" fill="#b9b9b9" />
<path d="M23.4 472.4 H26.6 L23.4 475.6Z" fill="#d8d8d8" />
<path d="M16 465.5H24 M16 468.5H24 M16 471.4H19.7" fill="None" stroke="#3d3d3d" stroke-width="1.1" />
<path d="M12.6 500.4 L13.4 497.2 L20.6 490 L22.8 492.2 L15.6 499.4Z" fill="none" stroke="#b9b9b9" stroke-width="1.1" />
<path d="M19.6 489.4 L21.2 487.8 L22 488.6 L24 486.3 A2 2 0 0 1 27 489.3 L24.8 491.4 L25.6 492.2 L24 493.8Z" fill="#b9b9b9" />
<path d="M33.1 498.9 L33.1 503.1 L28.9 503.1 Z" fill="#c4c4c4" />
<path d="M17.2 524.6 C15.4 521.8 13.6 519 12 516.8 C11.6 515.6 13 515 14 516 L16.6 518.4 L15.6 511.4 C15.4 510 17 509.8 17.4 511 L18.8 516.2 L18.9 509.8 C18.9 508.4 20.7 508.4 20.8 509.8 L21.2 516.2 L22.6 510.6 C23 509.4 24.6 509.8 24.4 511.2 L23.6 517.4 L25.8 513.4 C26.4 512.4 27.8 513 27.4 514.2 C26.6 517.2 25.6 520.2 24.6 522.4 C23.6 524.6 21 525.6 19 525.2 Z" fill="#b9b9b9" />
<circle cx="17.9" cy="538.9" r="5.6" fill="none" stroke="#b9b9b9" stroke-width="1.2"/>
<line x1="22.00" y1="543.00" x2="27.40" y2="548.40" stroke="#b9b9b9" stroke-width="1.9" />
<rect x="8.70" y="560.70" width="8.20" height="8.20" fill="#000" stroke="#d2d2d2" stroke-width="0.8" />
<rect x="12.20" y="564.20" width="2.40" height="2.40" fill="#535353" />
<rect x="5.20" y="557.20" width="8.20" height="8.20" fill="#000" stroke="#d2d2d2" stroke-width="0.8" />
<rect x="6.50" y="558.50" width="5.60" height="5.60" fill="#fff" />
<line x1="7.00" y1="563.60" x2="11.60" y2="559.00" stroke="#ff2020" stroke-width="0.9" />
<path d="M24.2 563.8 L28 560.2 V562.4 C31.6 562.4 33.2 564.6 33.2 567.4 H35 L32.2 571.2 L29.4 567.4 H31.2 C31.2 565.6 30.2 564.8 28 564.8 V567.2Z" fill="#a9a9a9" />
<path d="M14.6 584.7 H34.1 V604.2 H14.6Z M19.2 589.3 V599.8 H29.9 V589.3Z" fill="#ffffff" stroke="#3a3a3a" stroke-width="0.5" fill-rule="evenodd"/>
<rect x="19.40" y="589.50" width="10.30" height="10.10" fill="#535353" />
<line x1="16.00" y1="602.80" x2="33.00" y2="586.00" stroke="#ff0000" stroke-width="2.2" />
<rect x="5.80" y="575.80" width="19.50" height="19.50" fill="#ffffff" stroke="#3a3a3a" stroke-width="0.5" />
<path d="M6.3 594.8 L24.8 576.3" fill="None" stroke="#ff0000" stroke-width="2.2" />
<rect x="6.00" y="612.20" width="13.70" height="11.80" fill="#333333" rx="2" />
<rect x="9.30" y="614.50" width="7.60" height="7.20" fill="#585858" stroke="#c9c9c9" stroke-width="1" />
<text x="25.0" y="622.2" font-size="11.5" fill="#8a8a8a" font-family="'Liberation Serif',serif" font-weight="bold">T</text>
<rect x="6.00" y="631.10" width="27.80" height="21.70" fill="#333333" rx="2.5" />
<rect x="12.30" y="635.30" width="15.60" height="13.40" fill="#ffffff" stroke="#cfcfcf" stroke-width="0.7" />
<line x1="13.20" y1="647.60" x2="27.00" y2="636.40" stroke="#ff0000" stroke-width="1.8" />
<path d="M33.1 648.0 L33.1 652.2 L28.9 652.2 Z" fill="#c4c4c4" />
<rect x="18.20" y="669.20" width="8.80" height="5.90" fill="#b9b9b9" />
<path d="M17.4 665 V668 H14 M20.4 665.4V667 M23.4 665.4V667.6 M26.4 665.4V667 M14.4 671.5H16 M14.4 674.4H17" fill="None" stroke="#b9b9b9" stroke-width="0.9" />
<rect x="6.00" y="688.90" width="27.80" height="21.80" fill="#333333" rx="2.5" />
<rect x="15.30" y="694.30" width="10.60" height="10.50" fill="#585858" stroke="#c9c9c9" stroke-width="1" />
<rect x="15.30" y="694.30" width="10.60" height="2.60" fill="#c9c9c9" />
<path d="M33.1 705.8 L33.1 710.0 L28.9 710.0 Z" fill="#c4c4c4" />
</g>
<g id="properties-panel">
<rect x="841.20" y="62.00" width="2.80" height="698.20" fill="#3e3e3e" />
<rect x="842.10" y="74.00" width="0.90" height="686.00" fill="#4a4a4a" />
<rect x="844.00" y="62.00" width="253.00" height="698.20" fill="#535353" />
<rect x="844.00" y="62.00" width="253.00" height="11.50" fill="#464646" />
<line x1="844.00" y1="73.50" x2="1097.00" y2="73.50" stroke="#3c3c3c" stroke-width="1" />
<path d="M1083.4 65.6 L1085.6 67.7 L1083.4 69.8 M1087.2 65.6 L1089.4 67.7 L1087.2 69.8" fill="none" stroke="#b0b0b0" stroke-width="1.2" />
<rect x="947.00" y="74.00" width="150.00" height="26.50" fill="#464646" />
<line x1="947.50" y1="74.00" x2="947.50" y2="100.50" stroke="#3a3a3a" stroke-width="1" />
<line x1="997.50" y1="74.00" x2="997.50" y2="100.50" stroke="#3a3a3a" stroke-width="1" />
<line x1="1056.50" y1="74.00" x2="1056.50" y2="100.50" stroke="#3a3a3a" stroke-width="1" />
<line x1="947.00" y1="100.50" x2="1097.00" y2="100.50" stroke="#3e3e3e" stroke-width="1" />
<text x="856.0" y="92.3" font-size="11.8" fill="#ffffff" textLength="79.2" lengthAdjust="spacingAndGlyphs" font-weight="bold" >Eigenschaften</text>
<text x="959.0" y="92.3" font-size="11.8" fill="#b4b4b4" textLength="33.6" lengthAdjust="spacingAndGlyphs" font-weight="bold" >Seiten</text>
<text x="1009.0" y="92.3" font-size="11.8" fill="#b4b4b4" textLength="47.0" lengthAdjust="spacingAndGlyphs" font-weight="bold" >CC Libra</text>
<rect x="1084.40" y="100.80" width="12.60" height="644.40" fill="#4b4b4b" />
<rect x="1085.20" y="102.40" width="10.00" height="595.40" fill="#6c6c6c" rx="5" />
<text x="854.0" y="122.1" font-size="10.7" fill="#f0f0f0" textLength="81.5" lengthAdjust="spacingAndGlyphs" stroke="#f0f0f0" stroke-width="0.4" >Verknüpfte Datei</text>
<line x1="844.00" y1="134.20" x2="1084.50" y2="134.20" stroke="#484848" stroke-width="1.2" />
<text x="854.0" y="156.1" font-size="10.7" fill="#f0f0f0" textLength="74.4" lengthAdjust="spacingAndGlyphs" stroke="#f0f0f0" stroke-width="0.4" >Transformieren</text>
<path d="M860.6 178.9h5v5h-5zM869.9 178.9h5v5h-5zM879.2 178.9h5v5h-5zM860.6 188.2h5v5h-5zM879.2 188.2h5v5h-5zM860.6 197.5h5v5h-5zM869.9 197.5h5v5h-5zM879.2 197.5h5v5h-5z" fill="none" stroke="#cfcfcf" stroke-width="0.9" />
<path d="M865.6 181.4h4.3 M874.9 181.4h4.3 M865.6 200h4.3 M874.9 200h4.3 M863.1 183.9v4.3 M863.1 193.2v4.3 M881.7 183.9v4.3 M881.7 193.2v4.3" fill="None" stroke="#cfcfcf" stroke-width="0.9" />
<rect x="869.60" y="187.90" width="5.60" height="5.60" fill="#ffffff" />
<text x="900.1" y="180.8" font-size="10.5" fill="#f0f0f0" textLength="9.5" lengthAdjust="spacingAndGlyphs" stroke="#f0f0f0" stroke-width="0.35" >X:</text>
<rect x="913.80" y="167.40" width="53.50" height="18.70" fill="#3e3e3e" rx="2.5" stroke="#7a7a7a" stroke-width="1" />
<svg x="913.3" y="166.9" width="52.9" height="19.7" overflow="hidden"><text x="5.3" y="13.2" font-size="10.5" fill="#f0f0f0" textLength="50.0" lengthAdjust="spacingAndGlyphs" stroke="#f0f0f0" stroke-width="0.35" >148,5 mm</text>
</svg>
<text x="982.0" y="180.8" font-size="10.5" fill="#f0f0f0" textLength="8.5" lengthAdjust="spacingAndGlyphs" stroke="#f0f0f0" stroke-width="0.35" >B:</text>
<rect x="995.00" y="167.40" width="53.50" height="18.70" fill="#3e3e3e" rx="2.5" stroke="#7a7a7a" stroke-width="1" />
<svg x="994.5" y="166.9" width="52.9" height="19.7" overflow="hidden"><text x="5.1" y="13.2" font-size="10.5" fill="#f0f0f0" textLength="39.4" lengthAdjust="spacingAndGlyphs" stroke="#f0f0f0" stroke-width="0.35" >297 mm</text>
</svg>
<text x="900.1" y="205.9" font-size="10.5" fill="#f0f0f0" textLength="9.5" lengthAdjust="spacingAndGlyphs" stroke="#f0f0f0" stroke-width="0.35" >Y:</text>
<rect x="913.80" y="192.60" width="53.50" height="18.70" fill="#3e3e3e" rx="2.5" stroke="#7a7a7a" stroke-width="1" />
<svg x="913.3" y="192.1" width="52.9" height="19.7" overflow="hidden"><text x="5.3" y="13.2" font-size="10.5" fill="#f0f0f0" textLength="39.3" lengthAdjust="spacingAndGlyphs" stroke="#f0f0f0" stroke-width="0.35" >105 mm</text>
</svg>
<text x="980.6" y="205.9" font-size="10.5" fill="#f0f0f0" textLength="9.9" lengthAdjust="spacingAndGlyphs" stroke="#f0f0f0" stroke-width="0.35" >H:</text>
<rect x="995.00" y="192.60" width="53.50" height="18.70" fill="#3e3e3e" rx="2.5" stroke="#7a7a7a" stroke-width="1" />
<svg x="994.5" y="192.1" width="52.9" height="19.7" overflow="hidden"><text x="5.1" y="13.2" font-size="10.5" fill="#f0f0f0" textLength="39.4" lengthAdjust="spacingAndGlyphs" stroke="#f0f0f0" stroke-width="0.35" >210 mm</text>
</svg>
<rect x="1061.20" y="183.60" width="5.60" height="13.00" fill="none" rx="2.8" stroke="#bdbdbd" stroke-width="1.5" />
<line x1="1059.40" y1="185.60" x2="1068.40" y2="194.40" stroke="#535353" stroke-width="3.4" />
<line x1="1057.90" y1="184.00" x2="1069.90" y2="195.90" stroke="#bdbdbd" stroke-width="1.3" />
<circle cx="1065.7" cy="227.2" r="1.8" fill="#d4d4d4"/><circle cx="1071.0" cy="227.2" r="1.8" fill="#d4d4d4"/><circle cx="1076.3" cy="227.2" r="1.8" fill="#d4d4d4"/>
<line x1="844.00" y1="241.40" x2="1084.50" y2="241.40" stroke="#484848" stroke-width="1.2" />
<text x="854.0" y="262.9" font-size="10.7" fill="#f0f0f0" textLength="46.5" lengthAdjust="spacingAndGlyphs" stroke="#f0f0f0" stroke-width="0.4" >Aussehen</text>
<rect x="855.00" y="275.00" width="16.20" height="16.50" fill="#ffffff" stroke="#3c3c3c" stroke-width="0.6" />
<line x1="855.80" y1="290.60" x2="870.60" y2="275.80" stroke="#ff0a0a" stroke-width="2.1" />
<text x="882.3" y="289.2" font-size="10.5" fill="#f0f0f0" textLength="30.0" lengthAdjust="spacingAndGlyphs" stroke="#f0f0f0" stroke-width="0.35" >Fläche</text>
<rect x="855.00" y="301.00" width="16.20" height="16.50" fill="#ffffff" stroke="#3c3c3c" stroke-width="0.6" />
<rect x="859.20" y="305.20" width="7.80" height="8.10" fill="#535353" stroke="#333" stroke-width="0.8" />
<line x1="856.40" y1="315.40" x2="869.60" y2="302.60" stroke="#ff0a0a" stroke-width="2.1" />
<text x="882.3" y="315.1" font-size="10.5" fill="#f0f0f0" textLength="32.7" lengthAdjust="spacingAndGlyphs" stroke="#f0f0f0" stroke-width="0.35" >Kontur</text>
<line x1="882.30" y1="316.80" x2="915.00" y2="316.80" stroke="#dcdcdc" stroke-width="0.9" />
<rect x="944.80" y="300.60" width="68.50" height="19.50" fill="#3e3e3e" rx="2.5" stroke="#7a7a7a" stroke-width="1" />
<line x1="961.50" y1="300.60" x2="961.50" y2="320.10" stroke="#7a7a7a" stroke-width="1" />
<path d="M948.9 307.1 l3.5 -3.5 l3.5 3.5 M948.9 313.8 l3.5 3.6 l3.5 -3.6" fill="none" stroke="#d6d6d6" stroke-width="1.1" />
<svg x="962" y="300.1" width="33" height="21" overflow="hidden"><text x="3.3" y="14.8" font-size="10.5" fill="#f0f0f0" textLength="18.2" lengthAdjust="spacingAndGlyphs" stroke="#f0f0f0" stroke-width="0.35" >0 Pt</text>
</svg>
<line x1="995.60" y1="300.60" x2="995.60" y2="320.10" stroke="#7a7a7a" stroke-width="1" />
<path d="M1001.1 309.0 L1004.5 312.4 L1007.9 309.0" fill="none" stroke="#e0e0e0" stroke-width="1.4" />
<rect x="1020.40" y="300.60" width="53.00" height="19.50" fill="#3e3e3e" rx="2.5" stroke="#7a7a7a" stroke-width="1" />
<rect x="1020.00" y="300.50" width="35.00" height="19.70" fill="#e2e2e2" rx="1.5" />
<rect x="1024.30" y="307.00" width="21.80" height="8.20" fill="#000000" />
<path d="M1060.9 308.8 L1064.3 312.2 L1067.7 308.8" fill="none" stroke="#e0e0e0" stroke-width="1.4" />
<path d="M856 328.4h3.6v3.6h-3.6z M866.4 328.4h3.6v3.6h-3.6z M856 338.4h3.6v3.6h-3.6z M866.4 338.4h3.6v3.6h-3.6z" fill="#3d8df0" />
<path d="M861 330.2h4 M861 340.2h4 M857.8 333.4v3.6 M868.2 333.4v3.6" fill="None" stroke="#9a9a9a" stroke-width="1.3" />
<text x="882.3" y="341.1" font-size="10.5" fill="#f0f0f0" textLength="21.7" lengthAdjust="spacingAndGlyphs" stroke="#f0f0f0" stroke-width="0.35" >Ecke</text>
<line x1="882.30" y1="342.80" x2="904.00" y2="342.80" stroke="#dcdcdc" stroke-width="0.9" />
<rect x="944.80" y="326.80" width="68.50" height="19.50" fill="#3e3e3e" rx="2.5" stroke="#7a7a7a" stroke-width="1" />
<line x1="961.50" y1="326.80" x2="961.50" y2="346.30" stroke="#7a7a7a" stroke-width="1" />
<path d="M948.9 333.3 l3.5 -3.5 l3.5 3.5 M948.9 340.0 l3.5 3.6 l3.5 -3.6" fill="none" stroke="#d6d6d6" stroke-width="1.1" />
<svg x="962" y="326.3" width="49.4" height="21" overflow="hidden"><text x="4.1" y="14.8" font-size="10.5" fill="#f0f0f0" textLength="51.5" lengthAdjust="spacingAndGlyphs" stroke="#f0f0f0" stroke-width="0.35" >4,233 mm</text>
</svg>
<rect x="1020.40" y="326.80" width="53.00" height="19.50" fill="#3e3e3e" rx="2.5" stroke="#7a7a7a" stroke-width="1" />
<rect x="1020.00" y="326.70" width="35.00" height="19.70" fill="#e2e2e2" rx="1.5" />
<path d="M1022 329.9 H1046.7 V343.6" fill="None" stroke="#1c1c1c" stroke-width="1.5" />
<path d="M1060.9 334.8 L1064.3 338.2 L1067.7 334.8" fill="none" stroke="#e0e0e0" stroke-width="1.4" />
<rect x="856.40" y="354.60" width="13.20" height="13.00" fill="url(#chk2)" stroke="#c9c9c9" stroke-width="1" />
<text x="882.3" y="367.1" font-size="10.5" fill="#f0f0f0" textLength="46.7" lengthAdjust="spacingAndGlyphs" stroke="#f0f0f0" stroke-width="0.35" >Deckkraft</text>
<line x1="882.30" y1="368.80" x2="929.00" y2="368.80" stroke="#dcdcdc" stroke-width="0.9" />
<rect x="944.80" y="352.70" width="68.50" height="19.50" fill="#3e3e3e" rx="2.5" stroke="#7a7a7a" stroke-width="1" />
<rect x="996.00" y="353.20" width="16.80" height="18.50" fill="#4c4c4c" />
<line x1="995.60" y1="352.70" x2="995.60" y2="372.20" stroke="#7a7a7a" stroke-width="1" />
<text x="948.7" y="367.0" font-size="10.5" fill="#f0f0f0" textLength="30.5" lengthAdjust="spacingAndGlyphs" stroke="#f0f0f0" stroke-width="0.35" >100 %</text>
<path d="M1002.6 358.8 L1006.4 362.4 L1002.6 366" fill="None" stroke="#e0e0e0" stroke-width="1.4" />
<rect x="858.60" y="383.40" width="10.60" height="10.60" fill="none" rx="2" stroke="#cdcdcd" stroke-width="1.2" stroke-dasharray="4.6 2.1" stroke-dashoffset="2.3"/>
<path d="M870.6 394.4h2.6l-1.3 1.5z" fill="#cdcdcd" />
<text x="883.5" y="394.0" font-size="13" fill="#cdcdcd" textLength="11.0" lengthAdjust="spacingAndGlyphs" font-style="italic">fx</text>
<path d="M895.4 394.4h2.6l-1.3 1.5z" fill="#cdcdcd" />
<line x1="844.00" y1="409.00" x2="1084.50" y2="409.00" stroke="#484848" stroke-width="1.2" />
<text x="854.0" y="429.8" font-size="10.7" fill="#f0f0f0" textLength="51.7" lengthAdjust="spacingAndGlyphs" stroke="#f0f0f0" stroke-width="0.4" >Ausrichten</text>
<rect x="861.00" y="447.60" width="10.60" height="10.60" fill="none" stroke="#c6c6c6" stroke-width="1.1" />
<path d="M859.8 446.4h2.4v2.4h-2.4zM870.4 446.4h2.4v2.4h-2.4zM859.8 457.0h2.4v2.4h-2.4zM870.4 457.0h2.4v2.4h-2.4zM865.1 446.4h2.4v2.4h-2.4zM865.1 457.0h2.4v2.4h-2.4zM859.8 451.7h2.4v2.4h-2.4zM870.4 451.7h2.4v2.4h-2.4z" fill="#c6c6c6" />
<path d="M874.8 457.4h4.2l-2.1 2.4z" fill="#c6c6c6" />
<line x1="887.50" y1="441.00" x2="887.50" y2="464.50" stroke="#444" stroke-width="1" />
<line x1="894.50" y1="444.50" x2="894.50" y2="462.00" stroke="#c6c6c6" stroke-width="1.1" />
<rect x="896.50" y="446.00" width="7.50" height="6.00" fill="#c6c6c6" />
<rect x="896.50" y="454.00" width="12.50" height="5.50" fill="#c6c6c6" />
<line x1="933.60" y1="444.00" x2="933.60" y2="462.00" stroke="#c6c6c6" stroke-width="1.1" />
<rect x="929.00" y="446.00" width="9.40" height="6.00" fill="#c6c6c6" />
<rect x="927.00" y="454.00" width="13.20" height="5.50" fill="#c6c6c6" />
<line x1="973.60" y1="444.50" x2="973.60" y2="462.00" stroke="#c6c6c6" stroke-width="1.1" />
<rect x="963.30" y="446.00" width="8.20" height="6.00" fill="#c6c6c6" />
<rect x="958.60" y="454.00" width="12.90" height="5.50" fill="#c6c6c6" />
<line x1="989.00" y1="445.70" x2="1007.00" y2="445.70" stroke="#c6c6c6" stroke-width="1.1" />
<rect x="992.00" y="447.30" width="5.30" height="12.70" fill="#c6c6c6" />
<rect x="999.20" y="447.30" width="5.50" height="7.80" fill="#c6c6c6" />
<line x1="1021.00" y1="453.00" x2="1039.00" y2="453.00" stroke="#c6c6c6" stroke-width="1.1" />
<rect x="1024.00" y="446.30" width="5.00" height="13.50" fill="#c6c6c6" />
<rect x="1031.20" y="448.00" width="5.80" height="9.50" fill="#c6c6c6" />
<line x1="1053.00" y1="460.60" x2="1071.00" y2="460.60" stroke="#c6c6c6" stroke-width="1.1" />
<rect x="1056.00" y="446.00" width="5.00" height="13.50" fill="#c6c6c6" />
<rect x="1063.30" y="451.00" width="5.80" height="8.50" fill="#c6c6c6" />
<line x1="844.00" y1="471.90" x2="1084.50" y2="471.90" stroke="#484848" stroke-width="1.2" />
<text x="854.0" y="492.9" font-size="10.7" fill="#f0f0f0" textLength="59.7" lengthAdjust="spacingAndGlyphs" stroke="#f0f0f0" stroke-width="0.4" >Textumfluss</text>
<rect x="855.00" y="505.00" width="22.20" height="22.10" fill="#2b2b2b" rx="2" />
<path d="M859 509.5h14.5 M859 512.5h14.5 M859 515.5h14.5 M859 518.5h14.5 M859 521.5h14.5" fill="None" stroke="#f0f0f0" stroke-width="1.1" />
<rect x="863.20" y="510.90" width="5.90" height="9.20" fill="#ffffff" rx="2" stroke="#f0f0f0" stroke-width="0.9" fill-opacity="0.35"/>
<path d="M888.8 509.5h14.5 M888.8 521.5h14.5 M888.8 512.5h3 M888.8 515.5h3 M888.8 518.5h3 M900.3 512.5h3 M900.3 515.5h3 M900.3 518.5h3" fill="None" stroke="#d0d0d0" stroke-width="1.1" />
<rect x="893.30" y="511.80" width="5.50" height="7.40" fill="none" stroke="#d0d0d0" stroke-width="1" />
<path d="M918.6 509.5h6 M918.6 521.5h16 M918.6 512.5h3.4 M918.6 515.5h2.6 M918.6 518.5h3.4 M932 515.5h2.6 M931 518.5h3.6" fill="None" stroke="#d0d0d0" stroke-width="1.1" />
<circle cx="926.4" cy="516" r="3.6" fill="#d0d0d0"/><circle cx="931" cy="510.8" r="4.1" fill="#2d8cf0"/>
<path d="M948.8 509.5h14.6 M948.8 518.8h14.6 M948.8 521.8h14.6" fill="None" stroke="#d0d0d0" stroke-width="1.1" />
<rect x="952.80" y="511.60" width="6.60" height="5.00" fill="#d0d0d0" />
<path d="M978.8 509.5h14.6 M978.8 512.5h14.6" fill="None" stroke="#d0d0d0" stroke-width="1.1" />
<rect x="982.80" y="515.00" width="6.60" height="6.60" fill="#d0d0d0" />
<rect x="1005.50" y="508.50" width="11.40" height="11.40" fill="none" rx="2" stroke="#6e6e6e" stroke-width="1" />
<text x="1023.0" y="517.9" font-size="10.5" fill="#8b8b8b" textLength="49.3" lengthAdjust="spacingAndGlyphs" stroke="#8b8b8b" stroke-width="0.3" >Umkehren</text>
<circle cx="1065.7" cy="543.2" r="1.8" fill="#d4d4d4"/><circle cx="1071.0" cy="543.2" r="1.8" fill="#d4d4d4"/><circle cx="1076.3" cy="543.2" r="1.8" fill="#d4d4d4"/>
<line x1="844.00" y1="557.40" x2="1084.50" y2="557.40" stroke="#484848" stroke-width="1.2" />
<text x="854.0" y="578.9" font-size="10.7" fill="#f0f0f0" textLength="94.3" lengthAdjust="spacingAndGlyphs" stroke="#f0f0f0" stroke-width="0.4" >Rahmeneinpassung</text>
<rect x="859.40" y="595.50" width="13.10" height="9.10" fill="#c6c6c6" />
<path d="M859.5 607.1 V609.6 H872.7 V607.1" fill="None" stroke="#c6c6c6" stroke-width="1" stroke-dasharray="2.2 1.3"/>
<circle cx="859.4" cy="595.5" r="1.45" fill="#535353" stroke="#c6c6c6" stroke-width="1"/><circle cx="872.5" cy="595.5" r="1.45" fill="#535353" stroke="#c6c6c6" stroke-width="1"/><circle cx="859.4" cy="604.6" r="1.45" fill="#535353" stroke="#c6c6c6" stroke-width="1"/><circle cx="872.5" cy="604.6" r="1.45" fill="#535353" stroke="#c6c6c6" stroke-width="1"/>
<rect x="884.40" y="595.50" width="13.10" height="12.10" fill="none" stroke="#c6c6c6" stroke-width="1" />
<rect x="884.40" y="595.50" width="9.50" height="12.10" fill="#c6c6c6" />
<circle cx="884.4" cy="595.5" r="1.45" fill="#535353" stroke="#c6c6c6" stroke-width="1"/><circle cx="897.5" cy="595.5" r="1.45" fill="#535353" stroke="#c6c6c6" stroke-width="1"/><circle cx="884.4" cy="607.6" r="1.45" fill="#535353" stroke="#c6c6c6" stroke-width="1"/><circle cx="897.5" cy="607.6" r="1.45" fill="#535353" stroke="#c6c6c6" stroke-width="1"/>
<rect x="909.60" y="595.50" width="12.90" height="12.10" fill="none" stroke="#c6c6c6" stroke-width="1" />
<rect x="909.60" y="595.50" width="6.20" height="6.20" fill="#c6c6c6" />
<path d="M915.8 600.6 H919.4 M914.3 601.7 V604.9" fill="None" stroke="#c6c6c6" stroke-width="1" />
<path d="M920 600.6 l-2 -1.6 v3.2z M914.3 605.8 l-1.6 -2 h3.2z" fill="#c6c6c6" />
<circle cx="909.6" cy="595.5" r="1.45" fill="#535353" stroke="#c6c6c6" stroke-width="1"/><circle cx="922.5" cy="595.5" r="1.45" fill="#535353" stroke="#c6c6c6" stroke-width="1"/><circle cx="909.6" cy="607.6" r="1.45" fill="#535353" stroke="#c6c6c6" stroke-width="1"/><circle cx="922.5" cy="607.6" r="1.45" fill="#535353" stroke="#c6c6c6" stroke-width="1"/>
<rect x="934.40" y="595.50" width="13.10" height="12.10" fill="none" stroke="#c6c6c6" stroke-width="1" />
<rect x="934.40" y="595.50" width="6.50" height="6.00" fill="#c6c6c6" />
<path d="M947.5 600.6 H944.2 M939.5 607.6 V604.2" fill="None" stroke="#c6c6c6" stroke-width="1" />
<path d="M943 600.6 l2 -1.6 v3.2z M939.5 603.2 l-1.6 2 h3.2z" fill="#c6c6c6" />
<circle cx="934.4" cy="595.5" r="1.45" fill="#535353" stroke="#c6c6c6" stroke-width="1"/><circle cx="947.5" cy="595.5" r="1.45" fill="#535353" stroke="#c6c6c6" stroke-width="1"/><circle cx="934.4" cy="607.6" r="1.45" fill="#535353" stroke="#c6c6c6" stroke-width="1"/><circle cx="947.5" cy="607.6" r="1.45" fill="#535353" stroke="#c6c6c6" stroke-width="1"/>
<rect x="959.50" y="595.50" width="13.10" height="12.10" fill="none" stroke="#c6c6c6" stroke-width="1" />
<rect x="963.20" y="598.00" width="5.80" height="6.90" fill="#c6c6c6" />
<circle cx="959.5" cy="595.5" r="1.45" fill="#535353" stroke="#c6c6c6" stroke-width="1"/><circle cx="972.6" cy="595.5" r="1.45" fill="#535353" stroke="#c6c6c6" stroke-width="1"/><circle cx="959.5" cy="607.6" r="1.45" fill="#535353" stroke="#c6c6c6" stroke-width="1"/><circle cx="972.6" cy="607.6" r="1.45" fill="#535353" stroke="#c6c6c6" stroke-width="1"/>
<rect x="983.40" y="594.40" width="15.40" height="14.20" fill="none" stroke="#c6c6c6" stroke-width="1" stroke-dasharray="2.2 1.3"/>
<rect x="987.60" y="597.40" width="6.90" height="8.10" fill="#c6c6c6" />
<circle cx="987.6" cy="597.4" r="1.45" fill="#535353" stroke="#c6c6c6" stroke-width="1"/><circle cx="994.5" cy="597.4" r="1.45" fill="#535353" stroke="#c6c6c6" stroke-width="1"/><circle cx="987.6" cy="605.5" r="1.45" fill="#535353" stroke="#c6c6c6" stroke-width="1"/><circle cx="994.5" cy="605.5" r="1.45" fill="#535353" stroke="#c6c6c6" stroke-width="1"/>
<rect x="1009.90" y="590.80" width="63.20" height="19.50" fill="none" rx="2" stroke="#7b7b7b" stroke-width="1" />
<text x="1019.0" y="604.7" font-size="10.5" fill="#f4f4f4" textLength="44.0" lengthAdjust="spacingAndGlyphs" stroke="#f4f4f4" stroke-width="0.4" >Optionen</text>
<rect x="858.90" y="626.20" width="10.80" height="10.80" fill="none" rx="1.5" stroke="#b8b8b8" stroke-width="1" />
<text x="876.0" y="635.2" font-size="10.5" fill="#f0f0f0" textLength="112.0" lengthAdjust="spacingAndGlyphs" stroke="#f0f0f0" stroke-width="0.35" >Automatisch einpassen</text>
<line x1="844.00" y1="649.30" x2="1084.50" y2="649.30" stroke="#484848" stroke-width="1.2" />
<text x="854.0" y="666.2" font-size="10.7" fill="#f0f0f0" textLength="76.0" lengthAdjust="spacingAndGlyphs" stroke="#f0f0f0" stroke-width="0.4" >Schnellaktionen</text>
<rect x="854.90" y="678.20" width="103.20" height="19.10" fill="none" rx="2" stroke="#7b7b7b" stroke-width="1" />
<text x="862.0" y="691.7" font-size="10.5" fill="#f4f4f4" textLength="88.5" lengthAdjust="spacingAndGlyphs" stroke="#f4f4f4" stroke-width="0.4" >Form konvertieren</text>
<rect x="969.90" y="678.20" width="103.20" height="19.10" fill="none" rx="2" stroke="#7b7b7b" stroke-width="1" />
<text x="997.5" y="691.7" font-size="10.5" fill="#f4f4f4" textLength="47.5" lengthAdjust="spacingAndGlyphs" stroke="#f4f4f4" stroke-width="0.4" >Anordnen</text>
<rect x="854.90" y="708.90" width="103.20" height="19.10" fill="none" rx="2" stroke="#7b7b7b" stroke-width="1" />
<text x="864.0" y="722.4" font-size="10.5" fill="#f4f4f4" textLength="84.6" lengthAdjust="spacingAndGlyphs" stroke="#f4f4f4" stroke-width="0.4" >Datei importieren</text>
<rect x="969.90" y="708.90" width="103.20" height="19.10" fill="none" rx="2" stroke="#7b7b7b" stroke-width="1" />
<text x="998.5" y="722.4" font-size="10.5" fill="#f4f4f4" textLength="45.5" lengthAdjust="spacingAndGlyphs" stroke="#f4f4f4" stroke-width="0.4" >Einbetten</text>
<rect x="854.90" y="740.10" width="103.20" height="19.10" fill="none" rx="2" stroke="#7b7b7b" stroke-width="1" />
<text x="871.4" y="753.6" font-size="10.5" fill="#f4f4f4" textLength="70.1" lengthAdjust="spacingAndGlyphs" stroke="#f4f4f4" stroke-width="0.4" >Bearbeiten mit</text>
<rect x="969.90" y="740.10" width="103.20" height="19.10" fill="none" rx="2" stroke="#7b7b7b" stroke-width="1" />
<text x="975.0" y="753.6" font-size="10.5" fill="#f4f4f4" textLength="92.5" lengthAdjust="spacingAndGlyphs" stroke="#f4f4f4" stroke-width="0.4" >Im Finder anzeigen</text>
</g>
<path d="M0.5 760.2 V31 Q0.5 25.5 7 25.5 H1090 Q1096.5 25.5 1096.5 31 V760.2" fill="none" stroke="#2c2c2c" stroke-width="1" />
</g>
</svg>
</body>
</html>
